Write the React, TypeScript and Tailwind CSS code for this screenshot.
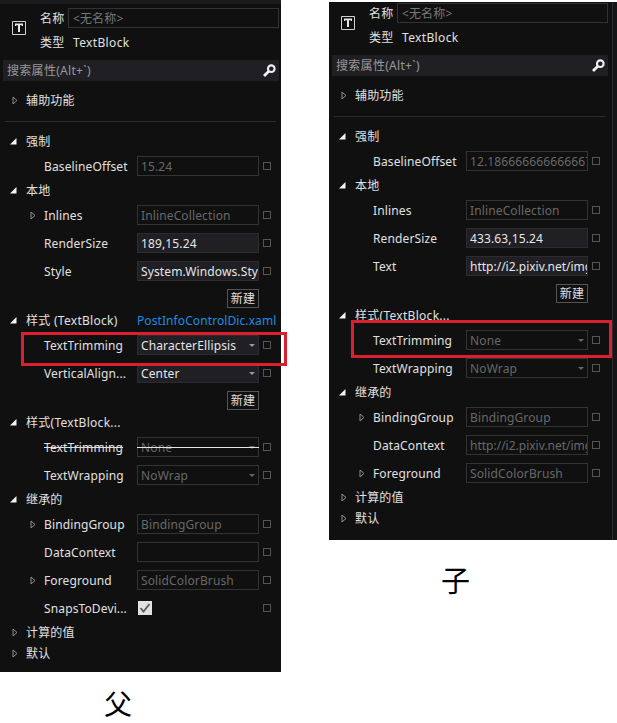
import { ReactNode } from "react";
import clsx from "clsx";

type Kind = "readonly" | "edit" | "select" | "select-readonly" | "check";

type Property = {
  label: string;
  value?: string;
  kind: Kind;
  expandable?: boolean;
  overridden?: boolean;
  tight?: boolean;
  mark?: string;
};

type Group = {
  title: string;
  link?: string;
  collapsed?: boolean;
  rows?: Property[];
  canCreate?: boolean;
};

const parentGroups: Group[] = [
  { title: "强制", rows: [{ label: "BaselineOffset", value: "15.24", kind: "readonly" }] },
  {
    title: "本地",
    canCreate: true,
    rows: [
      { label: "Inlines", value: "InlineCollection", kind: "readonly", expandable: true },
      { label: "RenderSize", value: "189,15.24", kind: "edit" },
      { label: "Style", value: "System.Windows.Sty", kind: "edit" },
    ],
  },
  {
    title: "样式 (TextBlock)",
    link: "PostInfoControlDic.xaml",
    canCreate: true,
    rows: [
      { label: "TextTrimming", value: "CharacterEllipsis", kind: "select", mark: "left-[21px] top-px w-[266px] h-[34px]" },
      { label: "VerticalAlign...", value: "Center", kind: "select" },
    ],
  },
  {
    title: "样式(TextBlock...",
    rows: [
      { label: "TextTrimming", value: "None", kind: "select-readonly", overridden: true },
      { label: "TextWrapping", value: "NoWrap", kind: "select-readonly" },
    ],
  },
  {
    title: "继承的",
    rows: [
      { label: "BindingGroup", value: "BindingGroup", kind: "readonly", expandable: true },
      { label: "DataContext", value: "", kind: "readonly" },
      { label: "Foreground", value: "SolidColorBrush", kind: "readonly", expandable: true },
      { label: "SnapsToDevi...", kind: "check" },
    ],
  },
  { title: "计算的值", collapsed: true },
  { title: "默认", collapsed: true },
];

const childGroups: Group[] = [
  { title: "强制", rows: [{ label: "BaselineOffset", value: "12.186666666666667", kind: "readonly" }] },
  {
    title: "本地",
    canCreate: true,
    rows: [
      { label: "Inlines", value: "InlineCollection", kind: "readonly" },
      { label: "RenderSize", value: "433.63,15.24", kind: "edit" },
      { label: "Text", value: "http://i2.pixiv.net/img", kind: "edit", tight: true },
    ],
  },
  {
    title: "样式(TextBlock...",
    rows: [
      { label: "TextTrimming", value: "None", kind: "select-readonly", mark: "left-[22px] -top-[6px] w-[261px] h-[38px]" },
      { label: "TextWrapping", value: "NoWrap", kind: "select-readonly" },
    ],
  },
  {
    title: "继承的",
    rows: [
      { label: "BindingGroup", value: "BindingGroup", kind: "readonly", expandable: true },
      { label: "DataContext", value: "http://i2.pixiv.net/img", kind: "readonly", tight: true },
      { label: "Foreground", value: "SolidColorBrush", kind: "readonly", expandable: true },
    ],
  },
  { title: "计算的值", collapsed: true },
  { title: "默认", collapsed: true },
];

function ClosedArrow() {
  return (
    <svg className="w-[6px] h-[9px] shrink-0" viewBox="0 0 6 9" fill="none" stroke="#8f8f8f">
      <path d="M1 1v7l4-3.5z" />
    </svg>
  );
}

function OpenArrow() {
  return (
    <svg className="w-[7px] h-[7px] shrink-0" viewBox="0 0 7 7" fill="#f4f4f4">
      <path d="M6.500 0v6.500H0z" />
    </svg>
  );
}

function ValueBox({ row }: { row: Property }) {
  const editable = row.kind === "edit" || row.kind === "select";
  const isSelect = row.kind === "select" || row.kind === "select-readonly";

  if (row.kind === "check") {
    return (
      <div className="w-[122px] pl-px">
        <svg className="w-[14px] h-[14px]" viewBox="0 0 14 14">
          <path fill="#e2e2e2" d="M0 0h14v14H0z" />
          <path d="M2.500 7l3 3.500L11.500 3" fill="none" stroke="#5c5c5c" strokeWidth="1.8" />
        </svg>
      </div>
    );
  }

  return (
    <div
      className={clsx(
        "relative flex items-center w-[122px] h-[20px] border pl-[3px] shrink-0",
        editable ? "bg-[#1f1f24] border-[#2b2b30] text-[#e6e6e6]" : "border-[#333333] text-[#686868]",
      )}
    >
      <span className={clsx("flex-1 pt-[2px] overflow-hidden", row.tight && "tracking-normal")}>{row.value}</span>
      {isSelect && (
        <svg className="w-[6px] h-[3px] mr-[3px] shrink-0" viewBox="0 0 6 3" fill={editable ? "#999999" : "#666666"}>
          <path d="M0 0h6L3 3z" />
        </svg>
      )}
      {row.overridden && <div className="absolute -left-px -right-px top-[9px] h-px bg-[#e6e6e6]" />}
    </div>
  );
}

function PropertyRow({ row }: { row: Property }) {
  return (
    <div className="relative flex items-center h-[28px]">
      <div className="w-[44px] pl-[30px] shrink-0">{row.expandable && <ClosedArrow />}</div>
      <div className="w-[93px] pt-[2px] shrink-0">
        <span className={clsx(row.overridden && "line-through")}>{row.label}</span>
      </div>
      <ValueBox row={row} />
      <div className="w-[8px] h-[8px] ml-[4px] border border-[#555555] shrink-0" />
      {row.mark && <div className={clsx("absolute z-10 border-3 border-[#dc1f2e]", row.mark)} />}
    </div>
  );
}

function GroupTitle({ title, link, collapsed }: Group) {
  return (
    <div className="flex items-center h-[21px]">
      <div className="flex w-[26px] shrink-0">
        {collapsed ? <div className="pl-[12px]"><ClosedArrow /></div> : <div className="pl-[10px]"><OpenArrow /></div>}
      </div>
      <span className={clsx("w-[111px] shrink-0", title.includes("(") && "pt-px tracking-[0.28px]")}>{title}</span>
      {link && <span className="pt-px text-[#1a8ee0] tracking-[0.09px]">{link}</span>}
    </div>
  );
}

function Inspector({ groups, className, children }: { groups: Group[]; className: string; children?: ReactNode }) {
  return (
    <div className={clsx("bg-[#101010] text-[#e0e0e0] text-[12px] leading-[18px] tracking-[0.13px] whitespace-nowrap", className)}>
      {children}
      <div className="flex h-[52px]">
        <div className="w-[40px] pl-[12px] pt-[13px]">
          <svg className="w-[14px] h-[14px]" viewBox="0 0 14 14" fill="none">
            <path stroke="#d0d0d0" d="M.5.5h13v13H.5z" />
            <path fill="#e8e8e8" d="M3 2.500h8V5h-1l-.3-.8H8V11H6V4.200H4.300L4 5H3z" />
          </svg>
        </div>
        <div>
          <div className="flex items-center h-[20px]">
            <span className="w-[28px] pt-px">名称</span>
            <div className="flex items-center w-[211px] h-[20px] pl-[4px] pt-px border border-[#333333] text-[#777777]">&lt;无名称&gt;</div>
          </div>
          <div className="flex items-center h-[20px] mt-[5px]">
            <span className="w-[33px]">类型</span>
            <span className="tracking-[0.35px]">TextBlock</span>
          </div>
        </div>
      </div>
      <div className="flex items-center justify-between w-[276px] h-[21px] ml-[3px] pl-[4px] pr-[3px] bg-[#1f1f24] text-[#999999]">
        <span className="pt-px tracking-[0.3px]">搜索属性(Alt+`)</span>
        <svg className="w-[13px] h-[13px]" viewBox="0 0 13 13" fill="none" stroke="#f0f0f0">
          <circle cx="8.300" cy="4.700" r="3.300" strokeWidth="2.100" />
          <path d="M5.800 7.200L1 12" strokeWidth="2.800" />
        </svg>
      </div>
      <div className="pt-[9px] h-[40px]">
        <GroupTitle title="辅助功能" collapsed />
      </div>
      <div className="w-[271px] h-px ml-[5px] mb-[9px] bg-[#2d2d2d]" />
      {groups.map((group, i) => (
        <div key={i}>
          <GroupTitle {...group} />
          {group.rows?.map((row, j) => <PropertyRow key={j} row={row} />)}
          {group.canCreate && (
            <div className="flex items-center w-[259px] h-[25px] justify-end">
              <div className="flex items-center justify-center w-[32px] h-[19px] mt-[2px] border border-[#555555]">新建</div>
            </div>
          )}
        </div>
      ))}
    </div>
  );
}

export default function App() {
  return (
    <div className="flex w-[617px] h-[723px] bg-white font-['Noto_Sans','Noto_Sans_CJK_SC',sans-serif] overflow-hidden">
      <div className="w-[329px]">
        <Inspector groups={parentGroups} className="w-[281px] h-[672px]">
          <div className="h-[4px] mb-[4px] bg-[#1b1b1d]" />
        </Inspector>
        <div className="pl-[104px] pt-[14px] text-[28px] leading-[36px] text-black">父</div>
      </div>
      <div className="w-[288px] pt-[2px]">
        <div className="flex">
          <Inspector groups={childGroups} className="w-[283px] h-[538px] pt-px" />
          <div className="w-[5px] h-[538px] bg-[#151517] border-l border-[#2d2d30]" />
        </div>
        <div className="pl-[112px] pt-[23px] text-[29px] leading-[36px] text-black">子</div>
      </div>
    </div>
  );
}
